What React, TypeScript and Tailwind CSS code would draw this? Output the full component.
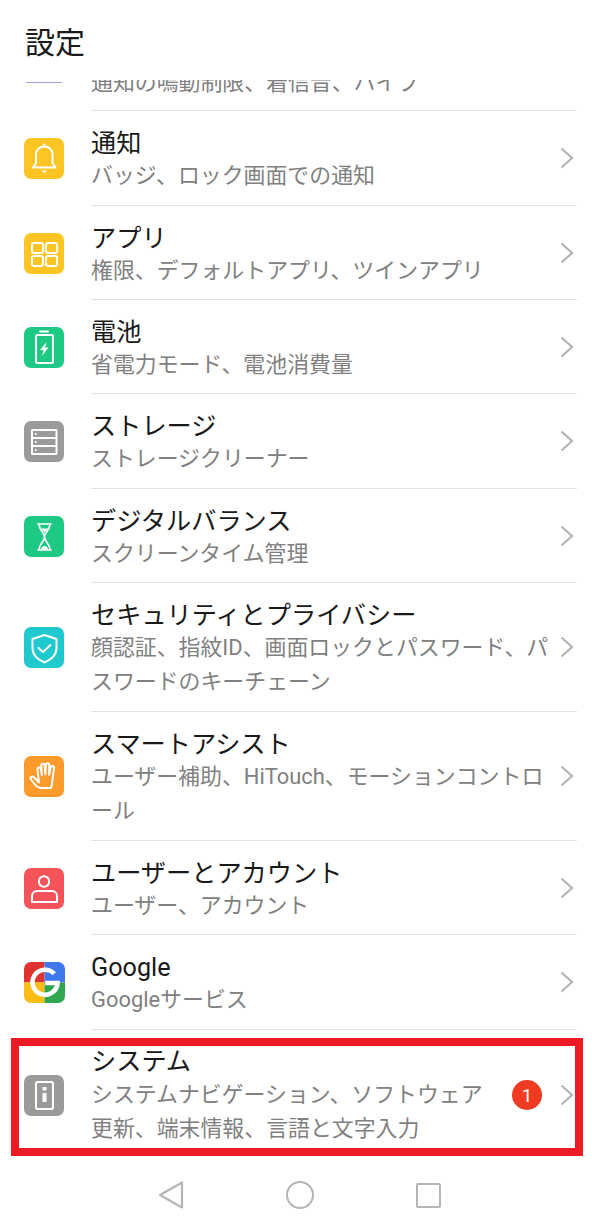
import type { ReactNode } from "react";

const stroke = { fill: "none", stroke: "#fff", strokeWidth: 2, strokeLinejoin: "round", strokeLinecap: "round" } as const;

function IconBox({ color, children }: { color: string; children: ReactNode }) {
  return (
    <div className={`h-[41px] w-[40px] overflow-hidden rounded-[7px] ${color}`}>
      <svg viewBox="0 0 40 41" className="h-[41px] w-[40px]">
        {children}
      </svg>
    </div>
  );
}

function BellIcon() {
  return (
    <IconBox color="bg-[#fdc524]">
      <g {...stroke}>
        <path d="M9 29.500h22.500l-3-4.500v-8.500c0-4.800-3.500-8-8.200-8s-8.300 3.200-8.300 8v8.500z" />
        <path d="M20.200 6.500v2" />
      </g>
      <path d="M17.500 32.500h5.500l-2.700 2.500z" fill="#fff" />
    </IconBox>
  );
}

function AppsIcon() {
  return (
    <IconBox color="bg-[#fdc524]">
      <g {...stroke}>
        <rect x="8" y="10" width="11" height="10" rx="2.200" />
        <rect x="22" y="10" width="11" height="10" rx="2.200" />
        <rect x="8" y="23" width="11" height="10" rx="2.200" />
        <rect x="22" y="23" width="11" height="10" rx="2.200" />
      </g>
    </IconBox>
  );
}

function BatteryIcon() {
  return (
    <IconBox color="bg-[#1ec983]">
      <g {...stroke}>
        <rect x="12" y="8" width="17" height="28" rx="1.500" />
      </g>
      <rect x="15" y="3.500" width="10" height="2" rx="1" fill="#fff" />
      <path d="M22.500 15l-6.500 8h3.500l-1.500 6 6.500-8.500h-3.500z" fill="#fff" />
    </IconBox>
  );
}

function StorageIcon() {
  return (
    <IconBox color="bg-[#9a9a9a]">
      <g {...stroke}>
        <rect x="8" y="9" width="24.500" height="24" rx="0.500" />
        <path d="M8 17h24.500M8 25h24.500" />
      </g>
      <circle cx="11.800" cy="13" r="1" fill="#fff" />
      <circle cx="11.800" cy="21" r="1" fill="#fff" />
      <circle cx="11.800" cy="29" r="1" fill="#fff" />
    </IconBox>
  );
}

function HourglassIcon() {
  return (
    <IconBox color="bg-[#1ec983]">
      <g {...stroke} strokeWidth={1.700}>
        <path d="M14 8h13M14 34h13" />
        <path d="M15 8c0 6.500 5.500 8 5.500 13s-5.500 6.500-5.500 13M26 8c0 6.500-5.500 8-5.500 13s5.500 6.500 5.500 13" />
      </g>
      <path d="M17 12.500h7l-3.500 4zM16.500 33.500c1.200-2.500 2.500-3.500 4-3.500s2.800 1 4 3.500z" fill="#fff" />
    </IconBox>
  );
}

function ShieldIcon() {
  return (
    <IconBox color="bg-[#1fc9ce]">
      <g {...stroke}>
        <path d="M20.500 8l12 4v9.500c0 6.500-5 11-12 14-7-3-12-7.500-12-14V12z" />
        <path d="M14.500 21l4.500 4 7.500-7" />
      </g>
    </IconBox>
  );
}

function HandIcon() {
  return (
    <IconBox color="bg-[#fd9a2c]">
      <g {...stroke} transform="translate(2.500 -0.500)">
        <path d="M12.500 27L11 14c-.3-2.300 3-2.800 3.400-.5l1 6-.6-9.500c-.1-2.300 3.200-2.500 3.400-.2l.7 9 .5-9.300c.1-2.300 3.400-2.200 3.400.1l-.3 9.700 1.700-7.500c.5-2.200 3.600-1.500 3.300.7l-1.500 12c-.5 4-1 6.500-1.500 8h-11c-2.500-.8-4-2-5.500-4l-3.500-4.500c-1.500-2 .8-4 2.800-2.500z" />
      </g>
    </IconBox>
  );
}

function UserIcon() {
  return (
    <IconBox color="bg-[#f4535a]">
      <g {...stroke}>
        <circle cx="20" cy="13.500" r="5.200" />
        <path d="M8 34v-6c0-3 2.400-5 5-5h15c2.600 0 5 2 5 5v6z" />
      </g>
    </IconBox>
  );
}

function GoogleIcon() {
  return (
    <div className="h-[41px] w-[41px] overflow-hidden rounded-[7px]">
      <svg viewBox="0 0 40 40" className="h-[41px] w-[41px]">
        <rect width="20" height="20" fill="#e0322e" />
        <rect x="20" width="20" height="20" fill="#3f78ee" />
        <rect y="20" width="20" height="20" fill="#fbbd13" />
        <rect x="20" y="20" width="20" height="20" fill="#30a650" />
        <path d="M29.500 11.500a12.200 12.200 0 1 0 3.200 9h-12" fill="none" stroke="#fff" strokeWidth="4.500" />
      </svg>
    </div>
  );
}

function InfoIcon() {
  return (
    <IconBox color="bg-[#9a9a9a]">
      <rect x="12" y="7" width="17" height="27" rx="1.800" fill="none" stroke="#fff" strokeWidth="2" />
      <rect x="18.500" y="12" width="4" height="3.500" fill="#fff" />
      <rect x="18.500" y="18" width="4" height="9" fill="#fff" />
    </IconBox>
  );
}

function Chevron() {
  return (
    <svg viewBox="0 0 14 22" className="h-[22px] w-[14px] shrink-0">
      <path d="M1.500 1.500L12 11 1.500 20.500" fill="none" stroke="#b3b3b3" strokeWidth="2.200" />
    </svg>
  );
}

interface Item {
  title: string;
  sub: string;
  icon: ReactNode;
  height: string;
  badge?: boolean;
  last?: boolean;
}

const items: Item[] = [
  { title: "通知", sub: "バッジ、ロック画面での通知", icon: <BellIcon />, height: "h-[95px]" },
  { title: "アプリ", sub: "権限、デフォルトアプリ、ツインアプリ", icon: <AppsIcon />, height: "h-[94px]" },
  { title: "電池", sub: "省電力モード、電池消費量", icon: <BatteryIcon />, height: "h-[94px]" },
  { title: "ストレージ", sub: "ストレージクリーナー", icon: <StorageIcon />, height: "h-[95px]" },
  { title: "デジタルバランス", sub: "スクリーンタイム管理", icon: <HourglassIcon />, height: "h-[94px]" },
  { title: "セキュリティとプライバシー", sub: "顔認証、指紋ID、画面ロックとパスワード、パスワードのキーチェーン", icon: <ShieldIcon />, height: "h-[129px]" },
  { title: "スマートアシスト", sub: "ユーザー補助、HiTouch、モーションコントロール", icon: <HandIcon />, height: "h-[129px]" },
  { title: "ユーザーとアカウント", sub: "ユーザー、アカウント", icon: <UserIcon />, height: "h-[94px]" },
  { title: "Google", sub: "Googleサービス", icon: <GoogleIcon />, height: "h-[95px]" },
  { title: "システム", sub: "システムナビゲーション、ソフトウェア更新、端末情報、言語と文字入力", icon: <InfoIcon />, height: "h-[130px]", badge: true, last: true },
];

function Row({ item }: { item: Item }) {
  return (
    <div className={`flex items-center ${item.height}`}>
      <div className="flex w-[91px] shrink-0 justify-start pl-[24px]">{item.icon}</div>
      <div className={`flex h-full grow items-center ${item.last ? "" : "border-b border-[#e2e2e2]"} mr-[26px]`}>
        <div className={item.badge ? "w-[394px] shrink-0" : "w-[460px] shrink-0"}>
          <p className={`${item.last ? "translate-y-[1px]" : "translate-y-[3px]"} text-[25.200px] leading-[34px] text-[#191919]`}>
            {item.title}
          </p>
          <p className={`${item.last ? "" : "translate-y-[1px]"} text-[21.900px] leading-[34px] text-[#808080]`}>{item.sub}</p>
        </div>
        {item.badge && (
          <div className="ml-[27px] flex h-[30px] w-[30px] shrink-0 items-center justify-center rounded-full bg-[#f03a22] text-[19px] leading-none text-white">
            1
          </div>
        )}
        <div className={item.badge ? "ml-[18px]" : "ml-[9px]"}>
          <Chevron />
        </div>
      </div>
    </div>
  );
}

export default function App() {
  return (
    <div
      className="relative h-[1231px] w-[603px] overflow-hidden bg-white"
      style={{ fontFamily: 'Roboto, "Noto Sans CJK JP", sans-serif' }}
    >
      <header className="flex h-[80px] items-start pl-[25px] pt-[25px]">
        <h1 className="text-[30px] font-normal leading-[36px] text-[#1a1a1a]">設定</h1>
      </header>

      {/* scrolled-off row, only the bottom edge shows */}
      <div className="flex h-[31px] overflow-hidden">
        <div className="w-[91px] shrink-0 pl-[26px]">
          <div className="mt-[2px] h-[1px] w-[36px] bg-[#a79fd8]" />
        </div>
        <div className="mr-[26px] flex grow items-start overflow-hidden border-b border-[#e2e2e2]">
          <p className="-mt-[14px] whitespace-nowrap text-[21.900px] leading-[34px] text-[#808080]">
            通知の鳴動制限、着信音、バイブ
          </p>
        </div>
      </div>

      {items.map((item) => (
        <Row item={item} key={item.title} />
      ))}

      <nav className="flex h-[72px] items-start pl-[158px] pt-[20px]">
        <svg viewBox="0 0 26 30" className="h-[30px] w-[26px]">
          <path d="M24 2.500v25L2 15z" fill="none" stroke="#b5b5b5" strokeWidth="2.200" strokeLinejoin="round" />
        </svg>
        <div className="ml-[102px] mt-[1px] h-[28px] w-[28px] rounded-full border-[2px] border-[#b5b5b5]" />
        <div className="ml-[102px] mt-[3px] h-[25px] w-[25px] rounded-[2px] border-[2px] border-[#b5b5b5]" />
      </nav>

      {/* annotation box drawn on top of the screenshot */}
      <div className="absolute left-[11px] top-[1038px] h-[118px] w-[572px] border-[8px] border-[#ed1c24]" />
    </div>
  );
}
